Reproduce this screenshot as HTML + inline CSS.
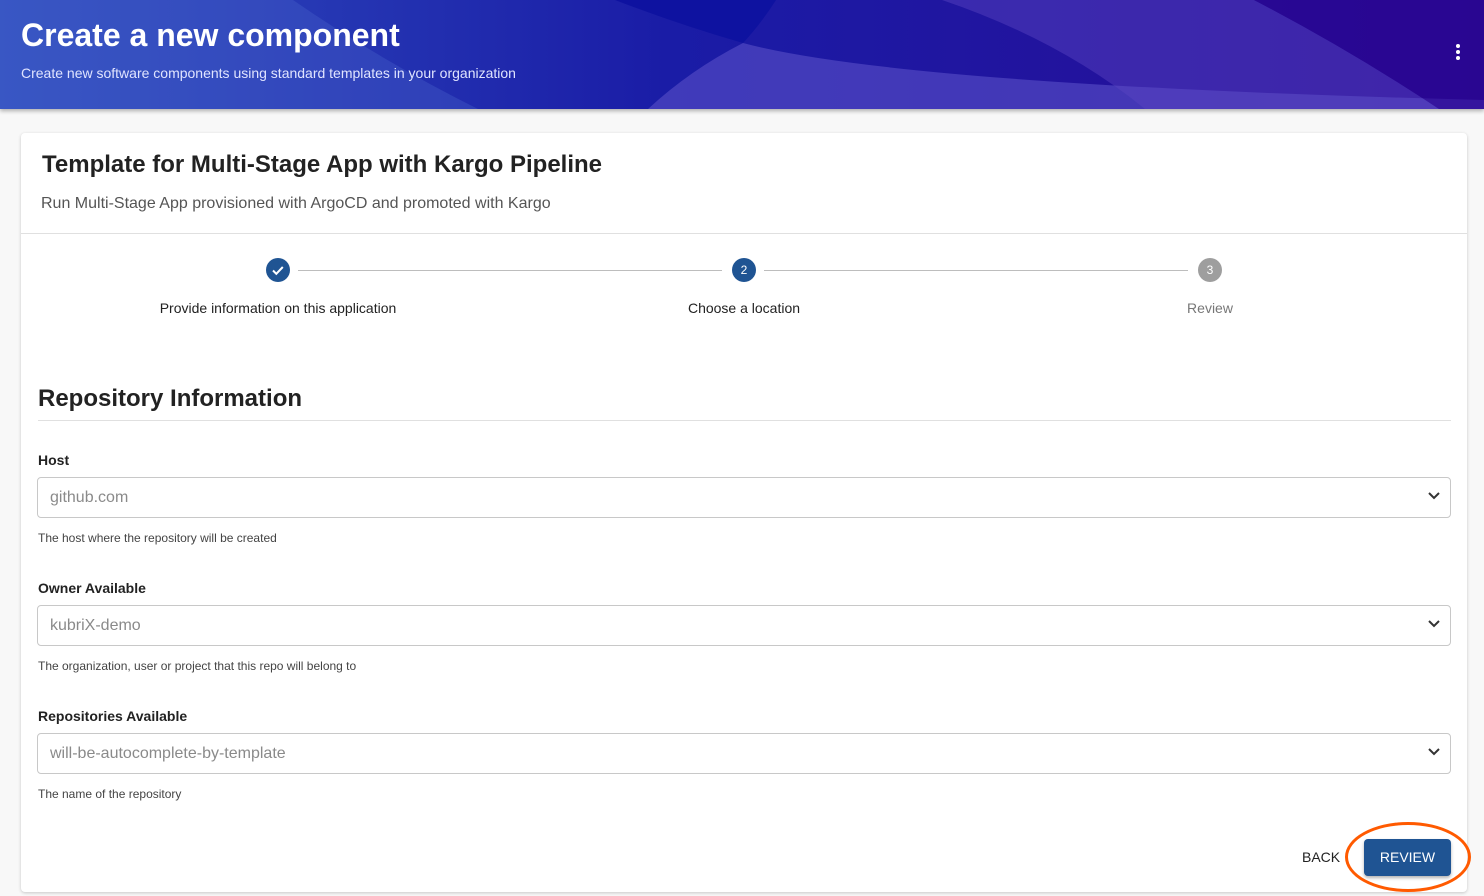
<!DOCTYPE html>
<html><head><style>
*{box-sizing:border-box;margin:0;padding:0}
body{width:1484px;height:896px;overflow:hidden;background:#f8f8f8;font-family:"Liberation Sans",Arial,sans-serif;position:relative}
.hdr{position:absolute;left:0;top:0;width:1484px;height:109px;box-shadow:0 2px 4px rgba(0,0,0,.3)}
.hdr h1{position:absolute;left:21px;top:17px;color:#fff;font-size:32px;font-weight:bold}
.hdr p{position:absolute;left:21px;top:65px;color:#e0e4ff;font-size:14px}
.dots{position:absolute;left:1456px;top:44px;width:4px}
.dots i{display:block;width:4px;height:4px;border-radius:2px;background:#fff;margin-bottom:2px}
.card{position:absolute;left:21px;top:133px;width:1446px;height:759px;background:#fff;box-shadow:0 1px 3px rgba(0,0,0,.2);border-radius:4px}
.t1{position:absolute;left:21px;top:18px;font-size:24px;font-weight:bold;color:#222}
.t2{position:absolute;left:20px;top:62px;font-size:16px;color:#555}
.sep{position:absolute;left:0;top:100px;width:100%;height:1px;background:#e0e0e0}
.circ{position:absolute;width:24px;height:24px;border-radius:12px;background:#1f5493;color:#fff;font-size:12px;text-align:center;line-height:24px}
.line{position:absolute;top:137px;height:1px;background:#bdbdbd}
.lbl{position:absolute;top:167px;font-size:14px;color:#222;transform:translateX(-50%);white-space:nowrap}
.h2{position:absolute;left:17px;top:252px;font-size:24px;font-weight:bold;color:#222}
.sep2{position:absolute;left:17px;top:287px;width:1413px;height:1px;background:#e0e0e0}
.fl{position:absolute;left:17px;font-size:14px;font-weight:bold;color:#222}
.inp{position:absolute;left:16px;width:1414px;height:41px;border:1px solid #c8c8c8;border-radius:4px;font-size:16px;color:#8a8a8a;padding:11px 12px}
.inp svg{position:absolute;right:9px;top:13px}
.help{position:absolute;left:17px;font-size:12px;color:#444}
.back{position:absolute;left:1281px;top:716px;font-size:14px;color:#222}
.btn{position:absolute;left:1343px;top:706px;width:87px;height:37px;background:#1f5493;color:#fff;font-size:14px;border-radius:4px;text-align:center;line-height:37px;box-shadow:0 2px 3px rgba(0,0,0,.3)}
.ring{position:absolute;left:1345px;top:822px;width:126px;height:70px;border:3px solid #ff5a00;border-radius:50%}
</style></head><body>
<div class="hdr">
<svg width="1484" height="109" style="position:absolute;left:0;top:0">
<defs><linearGradient id="g" x1="0" y1="0" x2="1" y2="0"><stop offset="0" stop-color="#3050c0"/><stop offset=".45" stop-color="#1a1ca6"/><stop offset="1" stop-color="#2a0a95"/></linearGradient></defs>
<rect width="1484" height="109" fill="url(#g)"/>
<path d="M0 0H293Q380 60 478 109H0Z" fill="#4a64cc" opacity=".35"/>
<path d="M615 0H776Q760 25 743 43Q680 25 615 0Z" fill="#0e12a0"/>
<path d="M743 43Q900 85 1484 100V109H648Q690 70 743 43Z" fill="#5a50c8" opacity=".6"/>
<path d="M942 0H1254Q1350 50 1439 109H1145Q1060 40 942 0Z" fill="#5a44c0" opacity=".45"/>
<path d="M1254 0H1484V109H1439Q1350 50 1254 0Z" fill="#2a0490" opacity=".6"/>
</svg>
<h1>Create a new component</h1>
<p>Create new software components using standard templates in your organization</p>
<div class="dots"><i></i><i></i><i></i></div>
</div>
<div class="card">
<div class="t1">Template for Multi-Stage App with Kargo Pipeline</div>
<div class="t2">Run Multi-Stage App provisioned with ArgoCD and promoted with Kargo</div>
<div class="sep"></div>
<div class="circ" style="left:245px;top:125px"><svg width="24" height="24"><path d="M7 12.5l3.3 3.3 6.5-6.8" stroke="#fff" stroke-width="2" fill="none"/></svg></div>
<div class="line" style="left:277px;width:424px"></div>
<div class="circ" style="left:711px;top:125px">2</div>
<div class="line" style="left:743px;width:424px"></div>
<div class="circ" style="left:1177px;top:125px;background:#9e9e9e">3</div>
<div class="lbl" style="left:257px">Provide information on this application</div>
<div class="lbl" style="left:723px">Choose a location</div>
<div class="lbl" style="left:1189px;color:#777">Review</div>
<div class="h2">Repository Information</div>
<div class="sep2"></div>
<div class="fl" style="top:319px">Host</div>
<div class="inp" style="top:344px">github.com<svg width="14" height="10"><path d="M2 2l5 5 5-5" stroke="#333" stroke-width="2" fill="none"/></svg></div>
<div class="help" style="top:398px">The host where the repository will be created</div>
<div class="fl" style="top:447px">Owner Available</div>
<div class="inp" style="top:472px">kubriX-demo<svg width="14" height="10"><path d="M2 2l5 5 5-5" stroke="#333" stroke-width="2" fill="none"/></svg></div>
<div class="help" style="top:526px">The organization, user or project that this repo will belong to</div>
<div class="fl" style="top:575px">Repositories Available</div>
<div class="inp" style="top:600px">will-be-autocomplete-by-template<svg width="14" height="10"><path d="M2 2l5 5 5-5" stroke="#333" stroke-width="2" fill="none"/></svg></div>
<div class="help" style="top:654px">The name of the repository</div>
<div class="back">BACK</div>
<div class="btn">REVIEW</div>
</div>
<div class="ring"></div>
</body></html>
